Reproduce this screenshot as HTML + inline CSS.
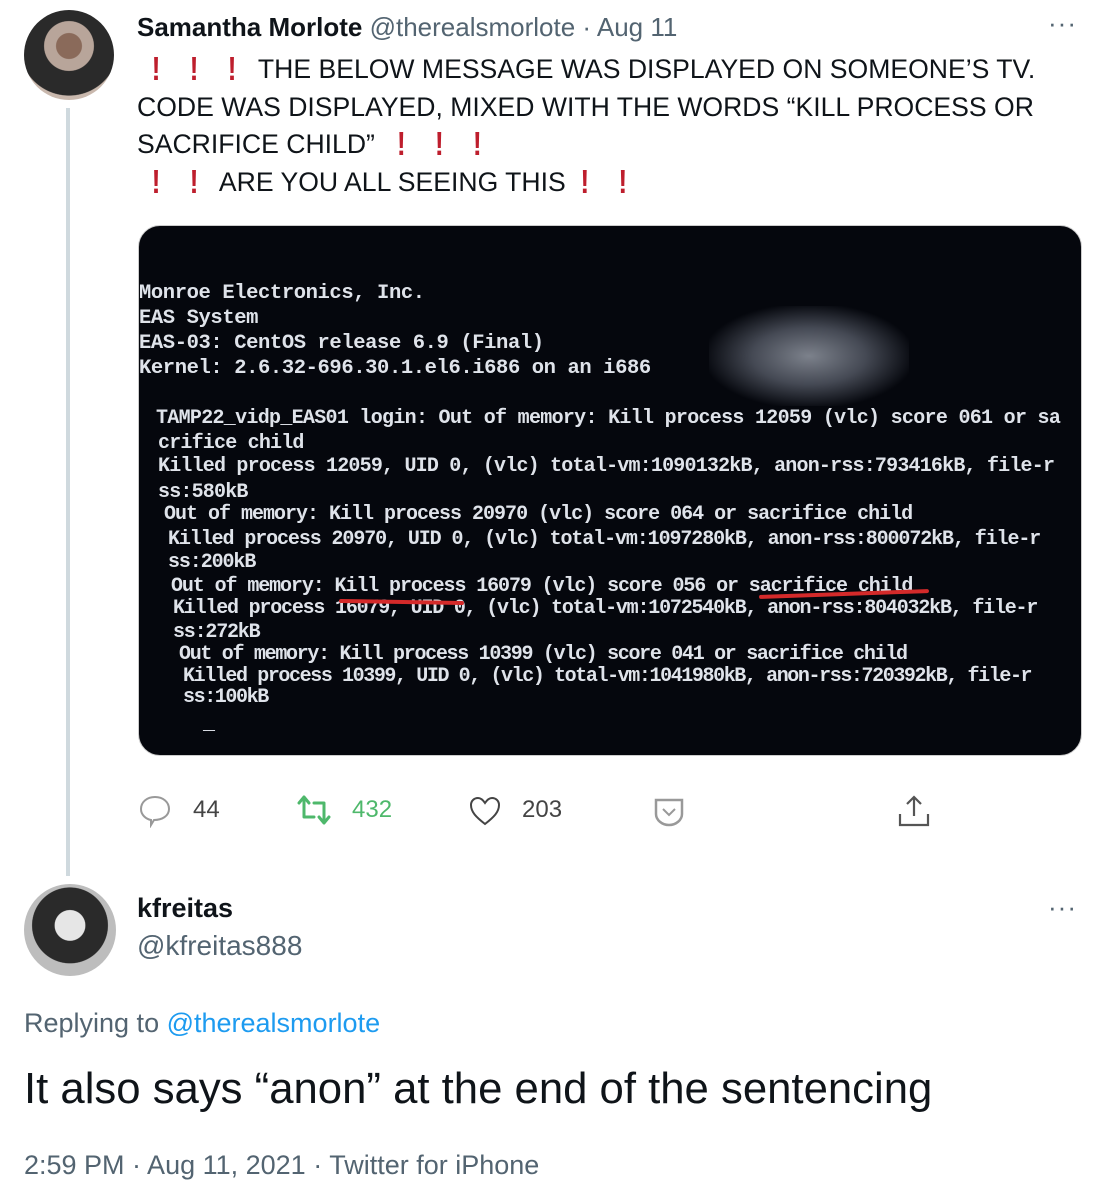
<!DOCTYPE html>
<html><head><meta charset="utf-8"><style>
body{margin:0;width:1110px;height:1200px;background:#fff;font-family:"Liberation Sans",Arial,sans-serif;color:#0f1419;position:relative;overflow:hidden}
.abs{position:absolute}
.ex{color:#be1e2d;font-weight:bold;display:inline-block;width:38px;text-align:center;transform:scaleY(1.25)}
.term{left:138px;top:225px;width:944px;height:531px;border-radius:22px;background:#05070d;overflow:hidden;border:1px solid #ccc;box-sizing:border-box}
.term pre{position:absolute;margin:0;font-family:"Liberation Mono",monospace;font-weight:bold;color:#dfe3ea;line-height:25px;letter-spacing:-0.5px}
.term .l{position:absolute;white-space:pre;font-family:"Liberation Mono",monospace;font-weight:bold;color:#dfe3ea;font-size:20px;line-height:22px}
.gray{color:#536471}
</style></head><body>
<div class="abs" style="left:24px;top:10px;width:90px;height:90px;border-radius:50%;background:radial-gradient(circle at 50% 40%,#8a6a5a 0 18%,#b8a59a 19% 35%,#2a2a2a 36% 70%,#c9b8ad 71%)"></div>
<div class="abs" style="left:66px;top:108px;width:4px;height:768px;background:#cfd9de"></div>
<div class="abs" style="left:137px;top:12px;font-size:26px;white-space:nowrap"><b>Samantha Morlote</b> <span class="gray">@therealsmorlote · Aug 11</span></div>
<div class="abs gray" style="left:1048px;top:8px;font-size:26px;letter-spacing:1px">···</div>
<div class="abs" style="left:137px;top:51px;font-size:26.6px;line-height:37.5px;width:940px">
<span class="ex">!</span><span class="ex">!</span><span class="ex">!</span> THE BELOW MESSAGE WAS DISPLAYED ON SOMEONE’S TV.<br>CODE WAS DISPLAYED, MIXED WITH THE WORDS “KILL PROCESS OR<br>SACRIFICE CHILD” <span class="ex">!</span><span class="ex">!</span><span class="ex">!</span><br><span class="ex">!</span><span class="ex">!</span> ARE YOU ALL SEEING THIS<span class="ex">!</span><span class="ex">!</span></div>
<div class="abs term">
<div class="abs" style="left:570px;top:80px;width:200px;height:100px;background:radial-gradient(ellipse,#9aa0ab 0,#555a66 40%,transparent 75%);opacity:.8"></div>
<pre style="left:0;top:55px;font-size:20.5px;letter-spacing:-0.4px">Monroe Electronics, Inc.
EAS System
EAS-03: CentOS release 6.9 (Final)
Kernel: 2.6.32-696.30.1.el6.i686 on an i686</pre>
<div class="l" style="left:17px;top:182px;letter-spacing:-0.7px">TAMP22_vidp_EAS01 login: Out of memory: Kill process 12059 (vlc) score 061 or sa</div>
<div class="l" style="left:19px;top:207px;letter-spacing:-0.8px">crifice child</div>
<div class="l" style="left:19px;top:230px;letter-spacing:-0.8px">Killed process 12059, UID 0, (vlc) total-vm:1090132kB, anon-rss:793416kB, file-r</div>
<div class="l" style="left:19px;top:256px;letter-spacing:-0.8px">ss:580kB</div>
<div class="l" style="left:25px;top:278px;letter-spacing:-1px">Out of memory: Kill process 20970 (vlc) score 064 or sacrifice child</div>
<div class="l" style="left:29px;top:303px;letter-spacing:-1.1px">Killed process 20970, UID 0, (vlc) total-vm:1097280kB, anon-rss:800072kB, file-r</div>
<div class="l" style="left:29px;top:326px;letter-spacing:-1.1px">ss:200kB</div>
<div class="l" style="left:32px;top:350px;letter-spacing:-1.1px">Out of memory: Kill process 16079 (vlc) score 056 or sacrifice child</div>
<div class="l" style="left:34px;top:372px;letter-spacing:-1.2px">Killed process 16079, UID 0, (vlc) total-vm:1072540kB, anon-rss:804032kB, file-r</div>
<div class="l" style="left:34px;top:396px;letter-spacing:-1.2px">ss:272kB</div>
<div class="l" style="left:40px;top:418px;letter-spacing:-1.3px">Out of memory: Kill process 10399 (vlc) score 041 or sacrifice child</div>
<div class="l" style="left:44px;top:440px;letter-spacing:-1.4px">Killed process 10399, UID 0, (vlc) total-vm:1041980kB, anon-rss:720392kB, file-r</div>
<div class="l" style="left:44px;top:461px;letter-spacing:-1.4px">ss:100kB</div>
<div class="l" style="left:64px;top:488px">_</div>
<div class="abs" style="left:200px;top:374px;width:125px;height:4px;background:#d42a2a;border-radius:2px;transform:rotate(1deg)"></div>
<div class="abs" style="left:620px;top:366px;width:170px;height:4px;background:#d42a2a;border-radius:2px;transform:rotate(-2deg)"></div>
</div>
<svg class="abs" style="left:138px;top:794px" width="34" height="34" viewBox="0 0 34 34" fill="none" stroke="#999" stroke-width="2"><path d="M17 3C9 3 3 8 3 15c0 6 5 10 10 11v5l3-5c8 0 15-4 15-11S25 3 17 3z"/></svg>
<div class="abs" style="left:193px;top:796px;font-size:24px;color:#444">44</div>
<svg class="abs" style="left:296px;top:794px" width="36" height="32" viewBox="0 0 36 32" fill="none" stroke="#4eb86b" stroke-width="3" stroke-linecap="round" stroke-linejoin="round"><path d="M3 9l5-6 5 6M8 3v20h10M33 23l-5 6-5-6M28 29V9H18"/></svg>
<div class="abs" style="left:352px;top:796px;font-size:24px;color:#4eb86b">432</div>
<svg class="abs" style="left:468px;top:795px" width="34" height="32" viewBox="0 0 34 32" fill="none" stroke="#444" stroke-width="2"><path d="M17 29C8 22 3 17 3 10c0-4 3-7 7-7 3 0 5 2 7 5 2-3 4-5 7-5 4 0 7 3 7 7 0 7-5 12-14 19z"/></svg>
<div class="abs" style="left:522px;top:796px;font-size:24px;color:#444">203</div>
<svg class="abs" style="left:652px;top:796px" width="34" height="32" viewBox="0 0 34 32" fill="none" stroke="#999" stroke-width="2.5"><path d="M4 4h26v14c0 6-6 11-13 11S4 24 4 18z"/><path d="M11 13l6 6 6-6" stroke-width="2"/></svg>
<svg class="abs" style="left:896px;top:794px" width="36" height="34" viewBox="0 0 36 34" fill="none" stroke="#555" stroke-width="2.2"><path d="M18 22V3M11 10l7-7 7 7M4 20v11h28V20"/></svg>
<div class="abs" style="left:24px;top:884px;width:92px;height:92px;border-radius:50%;background:radial-gradient(circle at 50% 45%,#e6e6e6 0 22%,#2a2a2a 23% 55%,#bdbdbd 56%)"></div>
<div class="abs" style="left:137px;top:893px;font-size:27px;font-weight:bold">kfreitas</div>
<div class="abs gray" style="left:137px;top:930px;font-size:28px">@kfreitas888</div>
<div class="abs gray" style="left:1048px;top:892px;font-size:26px;letter-spacing:1px">···</div>
<div class="abs gray" style="left:24px;top:1008px;font-size:27px">Replying to <span style="color:#1d9bf0">@therealsmorlote</span></div>
<div class="abs" style="left:24px;top:1064px;font-size:43.7px">It also says “anon” at the end of the sentencing</div>
<div class="abs gray" style="left:24px;top:1150px;font-size:27px">2:59 PM · Aug 11, 2021 · Twitter for iPhone</div>
</body></html>
